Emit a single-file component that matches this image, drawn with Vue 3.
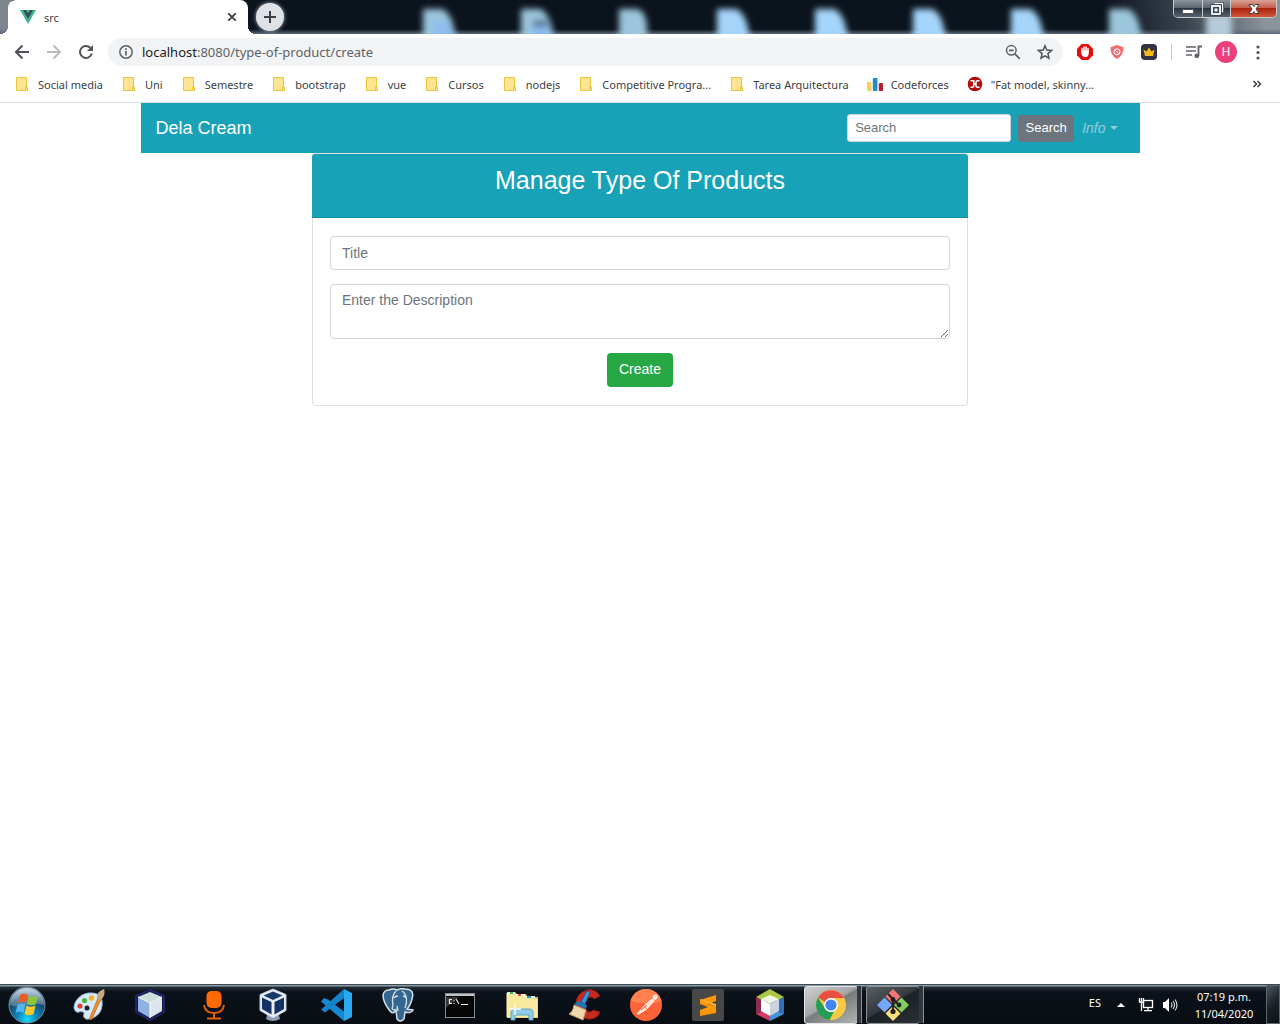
<script setup>
import { ref } from 'vue'

const bookmarks = [
  { label: 'Social media', icon: 'folder' },
  { label: 'Uni', icon: 'folder' },
  { label: 'Semestre', icon: 'folder' },
  { label: 'bootstrap', icon: 'folder' },
  { label: 'vue', icon: 'folder' },
  { label: 'Cursos', icon: 'folder' },
  { label: 'nodejs', icon: 'folder' },
  { label: 'Competitive Progra...', icon: 'folder' },
  { label: 'Tarea Arquitectura', icon: 'folder' },
  { label: 'Codeforces', icon: 'codeforces' },
  { label: '"Fat model, skinny...', icon: 'article' }
]

const blobs = [421, 519, 617, 715, 813, 911, 1009, 1107]

const search = ref('')
const title = ref('')
const description = ref('')
</script>

<template>
  <div class="desktop">
    <header class="browser">
      <div class="strip">
        <svg class="glass" viewBox="0 0 1280 34" preserveAspectRatio="xMaxYMin slice" aria-hidden="true">
          <defs>
            <filter id="soft" x="-30%" y="-30%" width="160%" height="160%"><feGaussianBlur stdDeviation="3" /></filter>
            <linearGradient id="shine" gradientUnits="userSpaceOnUse" x1="1110" y1="34" x2="1260" y2="0">
              <stop offset="0" stop-color="#0b131c" />
              <stop offset=".5" stop-color="#3a444f" />
              <stop offset="1" stop-color="#8b939b" />
            </linearGradient>
            <linearGradient id="edge" x1="0" x2="0" y1="0" y2="1">
              <stop offset="0" stop-color="#5a6878" stop-opacity="0" />
              <stop offset="1" stop-color="#5a6878" />
            </linearGradient>
          </defs>
          <rect width="1280" height="34" fill="#0b131c" />
          <rect x="1080" width="200" height="34" fill="url(#shine)" />
          <rect width="12" height="34" fill="#7d858e" />
          <rect y="29" width="1280" height="5" fill="url(#edge)" />
          <g filter="url(#soft)">
            <path v-for="(x, i) in blobs" :key="x" :d="`M${x + 2} 9h19q11 4 ${i === 2 ? 9 : 14} 31h-${i === 2 ? 28 : 33}z`" :fill="i < 3 || i === 7 ? '#9cc6dc' : '#a5d5fb'" />
            <path d="M434 22h14l8 16h-22zM532 22h14l8 16h-22z" fill="#8dbcf0" />
            <path d="M533 20h15v7h-15z" fill="#547590" />
            <path d="M1206 14h26v26h-26z" fill="#b4cbd9" />
          </g>
        </svg>
        <div class="tab">
          <svg width="16" height="16" viewBox="0 0 16 16" aria-hidden="true"><path d="M0 1h16L8 15z" fill="#41b883" /><path d="M3 1h10L8 10z" fill="#35495e" /><path d="M6 1h4L8 4.500z" fill="#41b883" /></svg>
          <span class="tab-title">src</span>
          <button class="plain" aria-label="Close tab"><svg width="16" height="16" viewBox="0 0 16 16"><path d="M4.300 4.300l7.400 7.400M11.700 4.300l-7.400 7.400" stroke="#3c4043" stroke-width="1.900" /></svg></button>
        </div>
        <button class="new-tab" aria-label="New tab"><svg width="14" height="14" viewBox="0 0 14 14"><path d="M7 1v12M1 7h12" stroke="#3c4043" stroke-width="2" /></svg></button>
        <div class="window-buttons">
          <button aria-label="Minimize"><svg width="14" height="14" viewBox="0 0 14 14"><rect x="1.500" y="7.500" width="11" height="4" rx="1" fill="#fff" stroke="#4b5360" /></svg></button>
          <button aria-label="Restore"><svg width="14" height="14" viewBox="0 0 14 14"><path d="M4.500 1.500h8v8h-2" fill="none" stroke="#39424f" stroke-width="3" /><path d="M4.500 1.500h8v8h-2" fill="none" stroke="#fff" stroke-width="1.400" /><rect x="2" y="4" width="8" height="8" fill="none" stroke="#39424f" stroke-width="3.600" /><rect x="2" y="4" width="8" height="8" fill="#39424f" stroke="#fff" stroke-width="1.800" /><rect x="4.500" y="6.500" width="3" height="3" fill="#fff" /></svg></button>
          <button class="close" aria-label="Close window"><svg width="14" height="14" viewBox="0 0 14 14"><path d="M2 2.500h3.500L7 4.500l1.500-2H12L9 7l3 4.500H8.500L7 9.500l-1.500 2H2L5 7z" fill="#fff" stroke="#4c3a40" /></svg></button>
        </div>
      </div>

      <div class="toolbar">
        <div class="nav-icons">
          <button class="plain" aria-label="Back"><svg width="16" height="16" viewBox="0 0 16 16"><path d="M15 8H2.500M8.500 1.500L2 8l6.500 6.500" fill="none" stroke="#505357" stroke-width="2" /></svg></button>
          <button class="plain" aria-label="Forward"><svg width="16" height="16" viewBox="0 0 16 16"><path d="M1 8h12.500M7.500 1.500L14 8l-6.500 6.500" fill="none" stroke="#babcbe" stroke-width="2" /></svg></button>
          <button class="plain" aria-label="Reload"><svg width="16" height="16" viewBox="0 0 16 16"><path d="M13.800 9.500A6 6 0 1 1 12.300 3.800" fill="none" stroke="#505357" stroke-width="2" /><path d="M15 1v6H9z" fill="#505357" /></svg></button>
        </div>
        <div class="omnibox">
          <svg width="16" height="16" viewBox="0 0 16 16" aria-hidden="true"><circle cx="8" cy="8" r="6.200" fill="none" stroke="#5f6368" stroke-width="1.500" /><path d="M8 7v4.500M8 4.300v1.700" stroke="#5f6368" stroke-width="1.700" /></svg>
          <span class="url"><b>localhost</b>:8080/type-of-product/create</span>
          <button class="plain" aria-label="Zoom"><svg width="16" height="16" viewBox="0 0 16 16"><circle cx="6.300" cy="6.300" r="4.800" fill="none" stroke="#5f6368" stroke-width="1.500" /><path d="M4 6.300h4.600M9.800 9.800l5 5" stroke="#5f6368" stroke-width="1.700" /></svg></button>
          <button class="plain" aria-label="Bookmark this page"><svg width="16" height="16" viewBox="0 0 16 16"><path d="M8 1.800l1.800 4.300 4.700.4-3.600 3.100 1.100 4.600L8 11.800l-4 2.400 1.100-4.600L1.500 6.500l4.700-.4z" fill="none" stroke="#505357" stroke-width="1.500" /></svg></button>
        </div>
        <div class="extensions">
          <button class="plain" aria-label="Ad blocker"><svg width="16" height="16" viewBox="0 0 16 16"><path d="M4.700 0h6.600L16 4.700v6.600L11.300 16H4.700L0 11.300V4.700z" fill="#e40d0d" /><path d="M5 7V4.500M7 7V3M9 7V3M11 8V4.500" stroke="#fff" stroke-width="1.500" stroke-linecap="round" /><path d="M4.300 6.500h7.400V10q-.7 3.300-3.400 3.300T4.300 9.500z" fill="#fff" /></svg></button>
          <button class="plain" aria-label="Shield"><svg width="16" height="16" viewBox="0 0 16 16"><path d="M8 1l6.500 2.200Q15 11 8 15 1 11 1.500 3.200z" fill="#f26d6d" /><circle cx="8" cy="7.800" r="3" fill="none" stroke="#fff" /><path d="M6 5.800l4 4" stroke="#fff" /></svg></button>
          <button class="plain" aria-label="Crown"><svg width="16" height="16" viewBox="0 0 16 16"><rect width="16" height="16" rx="4" fill="#303340" /><path d="M2.500 5.500l3 2L8 3.500l2.500 4 3-2L12 12H4z" fill="#fbb918" /></svg></button>
        </div>
        <span class="divider"></span>
        <button class="plain" aria-label="Media"><svg width="18" height="16" viewBox="0 0 18 16"><path d="M1 3h10M1 7h10M1 11h6" stroke="#5f6368" stroke-width="1.600" /><path d="M13.500 12V2.500H17" fill="none" stroke="#5f6368" stroke-width="1.800" /><circle cx="11.800" cy="11.800" r="2.400" fill="#5f6368" /></svg></button>
        <button class="avatar" aria-label="Profile H">H</button>
        <button class="plain menu" aria-label="Menu"><svg width="16" height="16" viewBox="0 0 16 16"><g fill="#505357"><circle cx="8" cy="3" r="1.600" /><circle cx="8" cy="8.500" r="1.600" /><circle cx="8" cy="14" r="1.600" /></g></svg></button>
      </div>

      <nav class="bookmarks" aria-label="Bookmarks">
        <a v-for="b in bookmarks" :key="b.label" href="#">
          <svg v-if="b.icon === 'folder'" width="16" height="16" viewBox="0 0 16 16" aria-hidden="true"><path d="M2.500 1.500h10v13h-10z" fill="#ffe591" stroke="#e9c53c" /><path d="M11.500 14.500v-3.500h2v3.500z" fill="#ffe591" stroke="#e9c53c" /></svg>
          <svg v-else-if="b.icon === 'codeforces'" width="16" height="16" viewBox="0 0 16 16" aria-hidden="true"><rect y="6" width="4.400" height="9" rx="1" fill="#f9cf58" /><rect x="5.800" y="2" width="4.600" height="13" rx="1" fill="#1f8dcb" /><rect x="11.800" y="7" width="4.200" height="8" rx="1" fill="#b71e28" /></svg>
          <svg v-else width="16" height="16" viewBox="0 0 16 16" aria-hidden="true"><circle cx="8" cy="8" r="7.300" fill="#ad0d0d" /><path d="M3.500 4.700h3.300v5q0 1.500-1.500 1.500H3.500M12.500 4.700h-1.800q-1.700 0-1.700 1.500v3.500q0 1.500 1.700 1.500h1.800M6.500 8h2.800" fill="none" stroke="#fff" stroke-width="1.500" /></svg>
          <span>{{ b.label }}</span>
        </a>
        <button class="plain more" aria-label="More bookmarks"><svg width="10" height="10" viewBox="0 0 10 10"><path d="M1.500 2l3 3-3 3M5.500 2l3 3-3 3" fill="none" stroke="#3c4043" stroke-width="1.500" /></svg></button>
      </nav>
    </header>

    <main class="page">
      <nav class="navbar">
        <a class="brand" href="#">Dela Cream</a>
        <form class="search" @submit.prevent>
          <input v-model="search" type="text" placeholder="Search" aria-label="Search">
          <button type="submit">Search</button>
        </form>
        <a class="info" href="#"><em>Info</em><span class="caret"></span></a>
      </nav>

      <section class="card">
        <div class="card-header"><h3>Manage Type Of Products</h3></div>
        <form class="card-body" @submit.prevent>
          <input v-model="title" type="text" placeholder="Title" aria-label="Title">
          <textarea v-model="description" rows="2" placeholder="Enter the Description" aria-label="Description"></textarea>
          <button type="submit">Create</button>
        </form>
      </section>
    </main>

    <footer class="taskbar">
      <button class="start" aria-label="Start">
        <svg width="40" height="40" viewBox="0 0 40 40">
          <defs>
            <radialGradient id="orb" cx=".5" cy=".9" r=".8"><stop offset="0" stop-color="#19dcff" /><stop offset=".35" stop-color="#0d86b8" /><stop offset=".75" stop-color="#17466b" /><stop offset="1" stop-color="#5d7f99" /></radialGradient>
            <linearGradient id="gloss" x1="0" x2="0" y1="0" y2="1"><stop offset="0" stop-color="#d8e5ee" stop-opacity=".85" /><stop offset="1" stop-color="#9db8ca" stop-opacity=".35" /></linearGradient>
          </defs>
          <circle cx="20" cy="20" r="18" fill="url(#orb)" stroke="#77909f" />
          <path d="M3 20a17 17 0 0 1 34 0q-9-3-17 0t-17 0z" fill="url(#gloss)" />
          <path d="M13 10q4-3 8 0l-2 8q-4-2.500-8 0z" fill="#ee5a24" />
          <path d="M22 10.500q4 2.500 9 0l-2 8.500q-4 2.500-9 0z" fill="#8cc63e" />
          <path d="M10.500 20q4-3 8 0l-2 8q-4-2.500-8 0z" fill="#56b5ee" />
          <path d="M19.500 20.500q4 2.500 9 0l-2 8.500q-4 2.500-9 0z" fill="#ffca28" />
        </svg>
      </button>
      <button class="app" aria-label="Paint"><svg width="34" height="34" viewBox="0 0 34 34"><path d="M3 19C4 10 13 4 21 5c8 0 11 6 10 13-1 8-7 12-13 13-5 1-6-3-5-5s-3-3-5-2-5-1-5-5z" fill="#d6eafa" stroke="#8eb7d8" /><circle cx="9" cy="18" r="2.600" fill="#dc3f34" /><circle cx="13.500" cy="12.500" r="2.600" fill="#4caf3e" /><circle cx="20.500" cy="10" r="2.800" fill="#eeb22d" /><circle cx="16" cy="20" r="2.500" fill="#162433" /><path d="M27 10l3 1-9 20-2 1 0-3z" fill="#f1902a" stroke="#a95d18" stroke-width=".600" /><path d="M26 10q-1-6 7-9 2 6-3 11z" fill="#c6a781" /></svg></button>
      <button class="app" aria-label="Cube"><svg width="34" height="34" viewBox="0 0 34 34"><path d="M17 2l14 6v16l-14 8-14-8V8z" fill="#17184b" stroke="#232468" stroke-width="2" /><path d="M17 4l12 5-12 6L5 9z" fill="#cbdfdb" /><path d="M5 9l12 6v15L5 23z" fill="#90b1e4" /><path d="M29 9l-12 6v15l12-7z" fill="#dbe5ec" /><path d="M5 9l12 6 12-6M17 15v15" stroke="#fff" fill="none" /></svg></button>
      <button class="app" aria-label="Microphone"><svg width="34" height="34" viewBox="0 0 34 34"><rect x="11.500" y="3" width="15" height="17" rx="5" fill="#ff6a00" /><path d="M9 17q1 8 10 8t10-8M19 25v5M12 30.500h14" fill="none" stroke="#e65f00" stroke-width="2" /></svg></button>
      <button class="app" aria-label="VirtualBox"><svg width="34" height="34" viewBox="0 0 34 34"><path d="M11 24h10l2 7q-7 4-14 0z" fill="#8d9bb5" /><path d="M16 1l13 5.500v16L16 30 3 22.500v-16z" fill="#e9edf4" stroke="#bdc8dc" /><path d="M16 3.500l9.500 4-9.500 4.500-9.500-4.500z" fill="#183a6a" /><path d="M5 9.500l9.500 4.500v12.500L5 21zM27 9.500L17.500 14v12.500L27 21z" fill="#123267" /></svg></button>
      <button class="app" aria-label="Visual Studio Code"><svg width="34" height="34" viewBox="0 0 34 34"><path d="M25 1v32L2 13.500l3-3.500 4 1.500 16 12z" fill="#1688cf" /><path d="M25 1v9L6 24.500l-4-3z" fill="#1684ca" /><path d="M25 1l8 4v24l-8 4z" fill="#2aa9f3" /></svg></button>
      <button class="app" aria-label="PostgreSQL"><svg width="34" height="34" viewBox="0 0 34 34"><path d="M8 2q4-2 8 0 4-2 8-1c7 0 9 4 7 10-1 4-3 8-5 10 2 1 4 0 6 1-1 3-5 3-8 2l-1 7q-4 4-7 0l-1-9q-3 5-6 1C5 18 2 12 2 7q1-5 6-5z" fill="#336791" stroke="#d6e0e7" stroke-width="1.500" /><path d="M15 3c-4 4-4 9-3 14 0 3-3 4 2 5M21 3c6 4 5 12 3 17M17 8q-3 0-4 2M22 8q2 0 3 2M16 18l1 5" fill="none" stroke="#d6e0e7" stroke-width="1.300" /></svg></button>
      <button class="app" aria-label="Command Prompt"><svg width="34" height="34" viewBox="0 0 34 34"><rect x="2.500" y="5.500" width="29" height="24" fill="#050505" stroke="#8a8d90" /><path d="M3 8h28V6H3z" fill="#c0c5c9" /><path d="M3 9h13L3 20z" fill="#343638" /><path d="M9 11.500H6.500v4H9M11 12.500v1M11 15v1M13 11l3 5M18 16.500h7" fill="none" stroke="#eee" stroke-width="1.200" /></svg></button>
      <button class="app" aria-label="File Explorer"><svg width="34" height="34" viewBox="0 0 34 34"><path d="M2 4h8l2 2h9l2 3h10v21H2z" fill="#d8b949" /><path d="M2 5h8l1 3h9l2 3h10v18H2z" fill="#f8e99c" stroke="#fff4bd" /><path d="M3 4h7v2H3z" fill="#f6f6ee" /><path d="M5 4h3v2H5z" fill="#3bbd45" /><path d="M11 6h9v2h-9z" fill="#f6f6ee" /><path d="M13 6h3v2h-3z" fill="#dd5635" /><path d="M20 8h10v2H20z" fill="#f6f6ee" /><path d="M22 8h4v2h-4z" fill="#3498d1" /><path d="M6 32v-8q1-3 4-3h14q4 0 4 3v8h-4v-5H10v5z" fill="#91cbe4" stroke="#56a5cb" /><path d="M10 15v12M4 21h12" stroke="#fff" stroke-width="1.300" /></svg></button>
      <button class="app" aria-label="CCleaner"><svg width="34" height="34" viewBox="0 0 34 34"><path d="M33 8Q28 0 20 2 9 5 9 16q0 14 12 15 9 1 12-7l-7-2q-3 4-7 0-3-5 1-11 4-4 7 0z" fill="#c72b20" stroke="#8d1716" /><path d="M20 3l3 1-5 12-4-2z" fill="#3997dd" stroke="#165d9d" /><path d="M11 13l9 4-1 4-12-5z" fill="#2374b7" /><path d="M7 17l12 5-3 10-14-6q4-2 5-9z" fill="#eed6ad" stroke="#c79f6b" /></svg></button>
      <button class="app" aria-label="Postman"><svg width="34" height="34" viewBox="0 0 34 34"><circle cx="17" cy="17" r="16" fill="#ff6339" /><path d="M1.500 13a16 16 0 0 1 31 0q-15 5-31 0z" fill="#ff8150" /><path d="M8 26l7-8 8-7 2 2-7 8-8 5zM24 8q5-3 4 2l-3 2z" fill="#ffe5d6" stroke="#fff" stroke-width=".800" /><path d="M15 18l3 3M12 22l6-5" stroke="#ff6339" /></svg></button>
      <button class="app" aria-label="Sublime Text"><svg width="34" height="34" viewBox="0 0 34 34"><rect x="1" y="1" width="32" height="32" rx="2" fill="#484848" /><path d="M9 12l16-5v6l-8 3 8 3v6L9 28v-6l8-3-8-3z" fill="#ff9800" /><path d="M9 12l16 7v-3l-16-5z" fill="#ffad32" /></svg></button>
      <button class="app" aria-label="NetBeans"><svg width="34" height="34" viewBox="0 0 34 34"><path d="M17 1l14 8-7 4-7-4-7 4-7-4z" fill="#adc743" /><path d="M3 9l7 4v10l-7 3z" fill="#8e2d54" /><path d="M31 9l-7 4v10l7 3z" fill="#2e70bb" /><path d="M3 26l7-3 7 5v5z" fill="#d63c64" /><path d="M31 26l-7-3-7 5v5z" fill="#4693db" /><path d="M17 7l9 4-9 5-9-5z" fill="#f1f5e5" /><path d="M8 11l9 5v12l-9-5z" fill="#fff" /><path d="M26 11l-9 5v12l9-5z" fill="#cbd3df" /></svg></button>
      <button class="app running active" aria-label="Chrome"><span><svg width="34" height="34" viewBox="0 0 34 34"><circle cx="17" cy="17" r="15" fill="#fbc943" /><path d="M4 9.500A15 15 0 0 1 30 10H17a7 7 0 0 0-6 4z" fill="#e94f40" /><path d="M4 9.500l7 11q3 4.500 9 3L15.500 32A15 15 0 0 1 4 9.500z" fill="#239e59" /><circle cx="17" cy="17" r="7" fill="#fff" /><circle cx="17" cy="17" r="5.600" fill="#4385f4" /></svg></span></button>
      <button class="app running" aria-label="Git"><span><svg width="34" height="34" viewBox="0 0 34 34"><path d="M17 1l7.500 7.500L17 16l-7.500-7.500z" fill="#f57676" /><path d="M25.500 9.500L33 17l-7.500 7.500L18 17z" fill="#83ce5f" /><path d="M8.500 9.500L16 17l-7.500 7.500L1 17z" fill="#75a8fa" /><path d="M17 18l7.500 7.500L17 33l-7.500-7.500z" fill="#ffe079" /><path d="M17 11v13M12 6l5 5 6 6" fill="none" stroke="#202020" stroke-width="1.800" /><g fill="#202020"><circle cx="17" cy="11.500" r="2.400" /><circle cx="23" cy="17" r="2.400" /><circle cx="17" cy="23.500" r="2.600" /></g></svg></span></button>
      <div class="tray">
        <span class="lang">ES</span>
        <svg class="up" width="8" height="4" viewBox="0 0 8 4" aria-hidden="true"><path d="M0 4l4-4 4 4z" fill="#fff" /></svg>
        <svg width="16" height="16" viewBox="0 0 16 16" aria-hidden="true"><rect x="5.500" y="3.500" width="9" height="7" fill="#101820" stroke="#fff" stroke-width="1.300" /><path d="M10 11v2M6 13.700h8M1.500 1v4h4V1M3.500 1v3M3.500 5v9" fill="none" stroke="#fff" stroke-width="1.300" /></svg>
        <svg width="16" height="16" viewBox="0 0 16 16" aria-hidden="true"><path d="M1 5h2l4-4v14l-4-4H1z" fill="#fff" /><path d="M9 5.500q2 2.500 0 5M11 4q3 4 0 8M13 2.500q4 5.500 0 11" fill="none" stroke="#dfe3e6" stroke-width="1.100" /></svg>
        <div class="clock"><span>07:19 p.m.</span><span>11/04/2020</span></div>
      </div>
      <button class="show-desktop" aria-label="Show desktop"></button>
    </footer>
  </div>
</template>

<style>
body {
  margin: 0;
  background: #fff;
}
</style>

<style scoped>
* {
  box-sizing: border-box;
}
.desktop {
  display: flex;
  flex-direction: column;
  min-height: 100vh;
  overflow: hidden;
  font-family: "Noto Sans", "Open Sans", sans-serif;
  font-size: 11px;
  color: #3c4043;
}
svg {
  display: block;
  flex: none;
}
button {
  font-family: inherit;
  padding: 0;
  border: 0;
}
a {
  color: inherit;
  text-decoration: none;
}
.plain {
  background: none;
}

/* Tab strip */
.strip {
  position: relative;
  display: flex;
  align-items: flex-start;
  height: 34px;
  padding: 0 3px 0 8px;
  background: #0b131c;
}
.glass {
  position: absolute;
  inset: 0;
  width: 100%;
  height: 34px;
}
.tab {
  position: relative;
  display: flex;
  align-items: center;
  width: 240px;
  height: 34px;
  padding: 0 8px 0 12px;
  border-radius: 8px 8px 0 0;
  background: #fff;
}
.tab::before,
.tab::after {
  content: "";
  position: absolute;
  bottom: 0;
  width: 8px;
  height: 8px;
}
.tab::before {
  left: -8px;
  background: radial-gradient(circle at 0 0, transparent 8px, #fff 8px);
}
.tab::after {
  right: -8px;
  background: radial-gradient(circle at 100% 0, transparent 8px, #fff 8px);
}
.tab-title {
  flex: 1;
  padding-left: 8px;
}
.new-tab {
  position: relative;
  display: grid;
  place-items: center;
  width: 28px;
  height: 28px;
  margin: 3px 0 0 8px;
  border-radius: 50%;
  background: #dee1e6;
  box-shadow: 0 0 4px #9fb2c6;
}
.window-buttons {
  position: relative;
  display: flex;
  height: 18px;
  margin-left: auto;
  border: 1px solid #c3c8cd;
  border-top: 0;
  border-radius: 0 0 5px 5px;
  overflow: hidden;
}
.window-buttons button {
  display: grid;
  place-items: center;
  width: 28px;
  background: linear-gradient(#8c949c, #5d6670 45%, #2b3540 50%, #59636e);
}
.window-buttons button + button {
  border-left: 1px solid #c3c8cd;
}
.window-buttons .close {
  width: 46px;
  background: linear-gradient(#d9a497, #c4604b 45%, #ab2410 50%, #d1583a);
}

/* Address bar */
.toolbar {
  display: flex;
  align-items: center;
  height: 36px;
  padding: 0 14px;
}
.nav-icons,
.extensions {
  display: flex;
  gap: 16px;
  margin-right: 14px;
}
.omnibox {
  flex: 1;
  display: flex;
  align-items: center;
  gap: 16px;
  height: 28px;
  margin-right: 14px;
  padding: 0 10px;
  border-radius: 14px;
  background: #f1f3f4;
}
.url {
  flex: 1;
  margin-left: -8px;
  font-size: 13px;
  color: #5f6368;
}
.url b {
  font-weight: 400;
  color: #202124;
}
.divider {
  width: 1px;
  height: 16px;
  margin-right: 13px;
  background: #c6c9cc;
}
.avatar {
  width: 22px;
  height: 22px;
  margin: 0 13px 0 12px;
  border-radius: 50%;
  background: #ec407a;
  color: #fff;
  font: 12px/22px Roboto, sans-serif;
}

/* Bookmarks */
.bookmarks {
  display: flex;
  align-items: center;
  gap: 18px;
  height: 33px;
  padding: 0 18px 4px 14px;
  border-bottom: 1px solid #dadce0;
}
.bookmarks a {
  display: flex;
  align-items: center;
  gap: 8px;
  white-space: nowrap;
}
.more {
  margin-left: auto;
}

/* Page */
.page {
  flex: 1;
  font-family: "Liberation Sans", Arial, sans-serif;
  font-size: 14px;
}
.navbar {
  display: flex;
  align-items: center;
  max-width: 999px;
  height: 50px;
  margin: 0 auto;
  padding: 0 22px 0 15px;
  background: #17a2b8;
}
.brand {
  margin-right: auto;
  font-size: 18px;
  color: #fff;
}
.search {
  display: flex;
  align-items: center;
  gap: 7px;
  margin-right: 8px;
}
input,
textarea {
  display: block;
  border: 1px solid #ced4da;
  border-radius: 4px;
  background: #fff;
  color: #495057;
  font-family: inherit;
  font-size: 14px;
}
input::placeholder,
textarea::placeholder {
  color: #6c757d;
  opacity: 1;
}
.search input {
  width: 164px;
  height: 28px;
  padding: 0 7px 2px;
  border-radius: 3px;
  font-size: 13px;
}
.search button {
  width: 56px;
  height: 27px;
  padding-bottom: 2px;
  border-radius: 3px;
  background: #6c757d;
  color: #fff;
  font-size: 13px;
}
.info {
  display: flex;
  align-items: center;
  gap: 4px;
  color: rgba(255, 255, 255, 0.5);
}
.caret {
  border: 4px solid transparent;
  border-top-color: currentColor;
  border-bottom: 0;
}
.card {
  max-width: 656px;
  margin: 0 auto;
  border: 1px solid #dfdfdf;
  border-radius: 4px;
}
.card-header {
  margin: 0 -1px;
  padding: 11px 18px 22px;
  border-bottom: 1px solid #148ea1;
  border-radius: 3px 3px 0 0;
  background: #17a2b8;
  color: #fff;
  text-align: center;
}
h3 {
  margin: 0;
  font-size: 25px;
  line-height: 30px;
  font-weight: 400;
}
.card-body {
  display: flex;
  flex-direction: column;
  align-items: center;
  gap: 14px;
  padding: 18px 17px;
}
.card-body input {
  width: 100%;
  height: 34px;
  padding: 0 11px;
}
.card-body textarea {
  width: 100%;
  height: 55px;
  padding: 5px 11px;
  line-height: 21px;
  resize: vertical;
}
.card-body button {
  height: 34px;
  padding: 0 12px 2px;
  border-radius: 4px;
  background: #28a745;
  color: #fff;
  font-size: 14px;
}

/* Taskbar */
.taskbar {
  display: flex;
  height: 40px;
  border-top: 1px solid #3c4a54;
  background: linear-gradient(#8b9aa3 1px, #24313a 2px, #0b1219 7px, #080d13);
  color: #fff;
}
.start {
  display: grid;
  place-items: center;
  width: 54px;
  margin-right: 3px;
  background: none;
}
.app {
  display: grid;
  place-items: center;
  width: 62px;
  background: none;
}
.running {
  position: relative;
  justify-items: start;
  padding-left: 3px;
}
.running span {
  display: grid;
  place-items: center;
  width: 54px;
  height: 38px;
  border: 1px solid #8c9195;
  border-radius: 3px;
  background: linear-gradient(150deg, #596065, #33393d 45%, #1c2125 50%, #2b3034);
}
.running::after {
  content: "";
  position: absolute;
  top: 1px;
  right: 1px;
  width: 4px;
  height: 37px;
  border-right: 1px solid #8c9195;
  background: #30363b;
}
.running.active span {
  border-color: #e4e5e6;
  background: linear-gradient(150deg, #cfd0d1, #a4a6a8 45%, #797c7e 50%, #b1b3b4);
}
.tray {
  display: flex;
  align-items: center;
  gap: 8px;
  margin-left: auto;
}
.lang {
  padding-bottom: 4px;
}
.up {
  margin: 0 5px 0 8px;
}
.clock {
  display: flex;
  flex-direction: column;
  align-items: center;
  width: 72px;
  margin: 0 6px 0 2px;
  line-height: 17px;
}
.show-desktop {
  width: 14px;
  border: 1px solid #5d666d;
  background: linear-gradient(135deg, #4d565d, #1a2127 50%, #0c1116);
}
</style>
